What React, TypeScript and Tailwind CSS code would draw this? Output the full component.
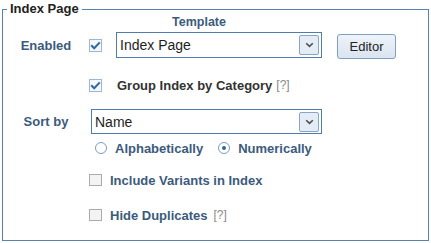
import React from "react";

const font = { fontFamily: '"Liberation Sans", Arial, sans-serif' };

function CheckBox({ checked }: { checked?: boolean }) {
  return checked ? (
    <span className="flex h-[13px] w-[13px] shrink-0 items-center justify-center border border-[#9db7d3] bg-[#f5f8fb]">
      <svg width="11" height="9" viewBox="0 0 11 9">
        <path d="M1.2 4.2 L4.2 7.2 L9.8 1.4" fill="none" stroke="#2f67a3" strokeWidth="2" />
      </svg>
    </span>
  ) : (
    <span className="block h-[12px] w-[13px] shrink-0 border border-[#ababab] bg-[#f3f3f3]" />
  );
}

function Radio({ checked }: { checked?: boolean }) {
  return (
    <span className="flex h-[12px] w-[12px] shrink-0 items-center justify-center rounded-full border border-[#7a9cc2] bg-white">
      {checked && <span className="block h-[4px] w-[4px] rounded-full bg-[#2f67a3]" />}
    </span>
  );
}

function DropButton() {
  return (
    <span className="flex h-[20px] w-[20px] items-center justify-center rounded-[2px] border border-[#8aa6c6] bg-[#e4ecf5]">
      <svg width="9" height="6" viewBox="0 0 9 6">
        <path d="M1.2 1.2 L4.5 4.4 L7.8 1.2" fill="none" stroke="#505050" strokeWidth="1.6" />
      </svg>
    </span>
  );
}

function Select({ value, w, h }: { value: string; w: string; h: string }) {
  return (
    <div className={`flex items-center justify-between border border-[#4f7db0] bg-white pl-[3px] pr-[2px] ${w} ${h}`}>
      <span className="text-[14px] leading-[16px] text-[#1e1e1e]">{value}</span>
      <DropButton />
    </div>
  );
}

const label = "w-[86px] shrink-0 text-center text-[13px] font-bold leading-[15px] text-[#3c5a7d]";

export default function App() {
  return (
    <div className="h-[243px] w-[431px] bg-white" style={font}>
      <fieldset className="ml-[2px] mt-[1px] h-[240px] w-[427px] border border-[#5584b3] p-0">
        <legend className="ml-[4px] px-[3px] text-[13px] font-bold leading-[16px] text-[#222]">Index Page</legend>
        <div className="h-[15px] pl-[169px] text-[12.5px] font-bold leading-[11px] text-[#3c5a7d]">Template</div>

        <div className="flex h-[26px] items-center">
          <span className={label}>Enabled</span>
          <CheckBox checked />
          <div className="ml-[14px]">
            <Select value="Index Page" w="w-[206px]" h="h-[26px]" />
          </div>
          <button className="ml-[15px] mt-[2px] h-[25px] w-[59px] rounded-[3px] border border-[#7f9fc3] bg-gradient-to-b from-[#eef3f9] to-[#dae4ef] text-[13px] leading-[15px] text-[#222]">
            Editor
          </button>
        </div>

        <div className="mt-[17px] flex h-[20px] items-center pl-[86px]">
          <CheckBox checked />
          <span className="ml-[15px] text-[13px] font-bold leading-[15px] text-[#333]">Group Index by Category</span>
          <span className="ml-[4px] text-[12px] leading-[13px] text-[#8a8a8a]">[?]</span>
        </div>

        <div className="mt-[14px] flex h-[25px] items-center">
          <span className={label}>Sort by</span>
          <div className="ml-[2px]">
            <Select value="Name" w="w-[231px]" h="h-[25px]" />
          </div>
        </div>

        <div className="mt-[6px] flex h-[16px] items-center pl-[92px] text-[13px] font-bold leading-[15px] text-[#3c5a7d]">
          <Radio />
          <span className="ml-[8px]">Alphabetically</span>
          <span className="ml-[15px]">
            <Radio checked />
          </span>
          <span className="ml-[8px]">Numerically</span>
        </div>

        <div className="mt-[16px] flex h-[16px] items-center pl-[86px]">
          <CheckBox />
          <span className="ml-[8px] text-[13px] font-bold leading-[15px] text-[#3c5a7d]">Include Variants in Index</span>
        </div>

        <div className="mt-[19px] flex h-[16px] items-center pl-[86px]">
          <CheckBox />
          <span className="ml-[8px] text-[13px] font-bold leading-[15px] text-[#3c5a7d]">Hide Duplicates</span>
          <span className="ml-[6px] text-[12px] leading-[13px] text-[#8a8a8a]">[?]</span>
        </div>
      </fieldset>
    </div>
  );
}
